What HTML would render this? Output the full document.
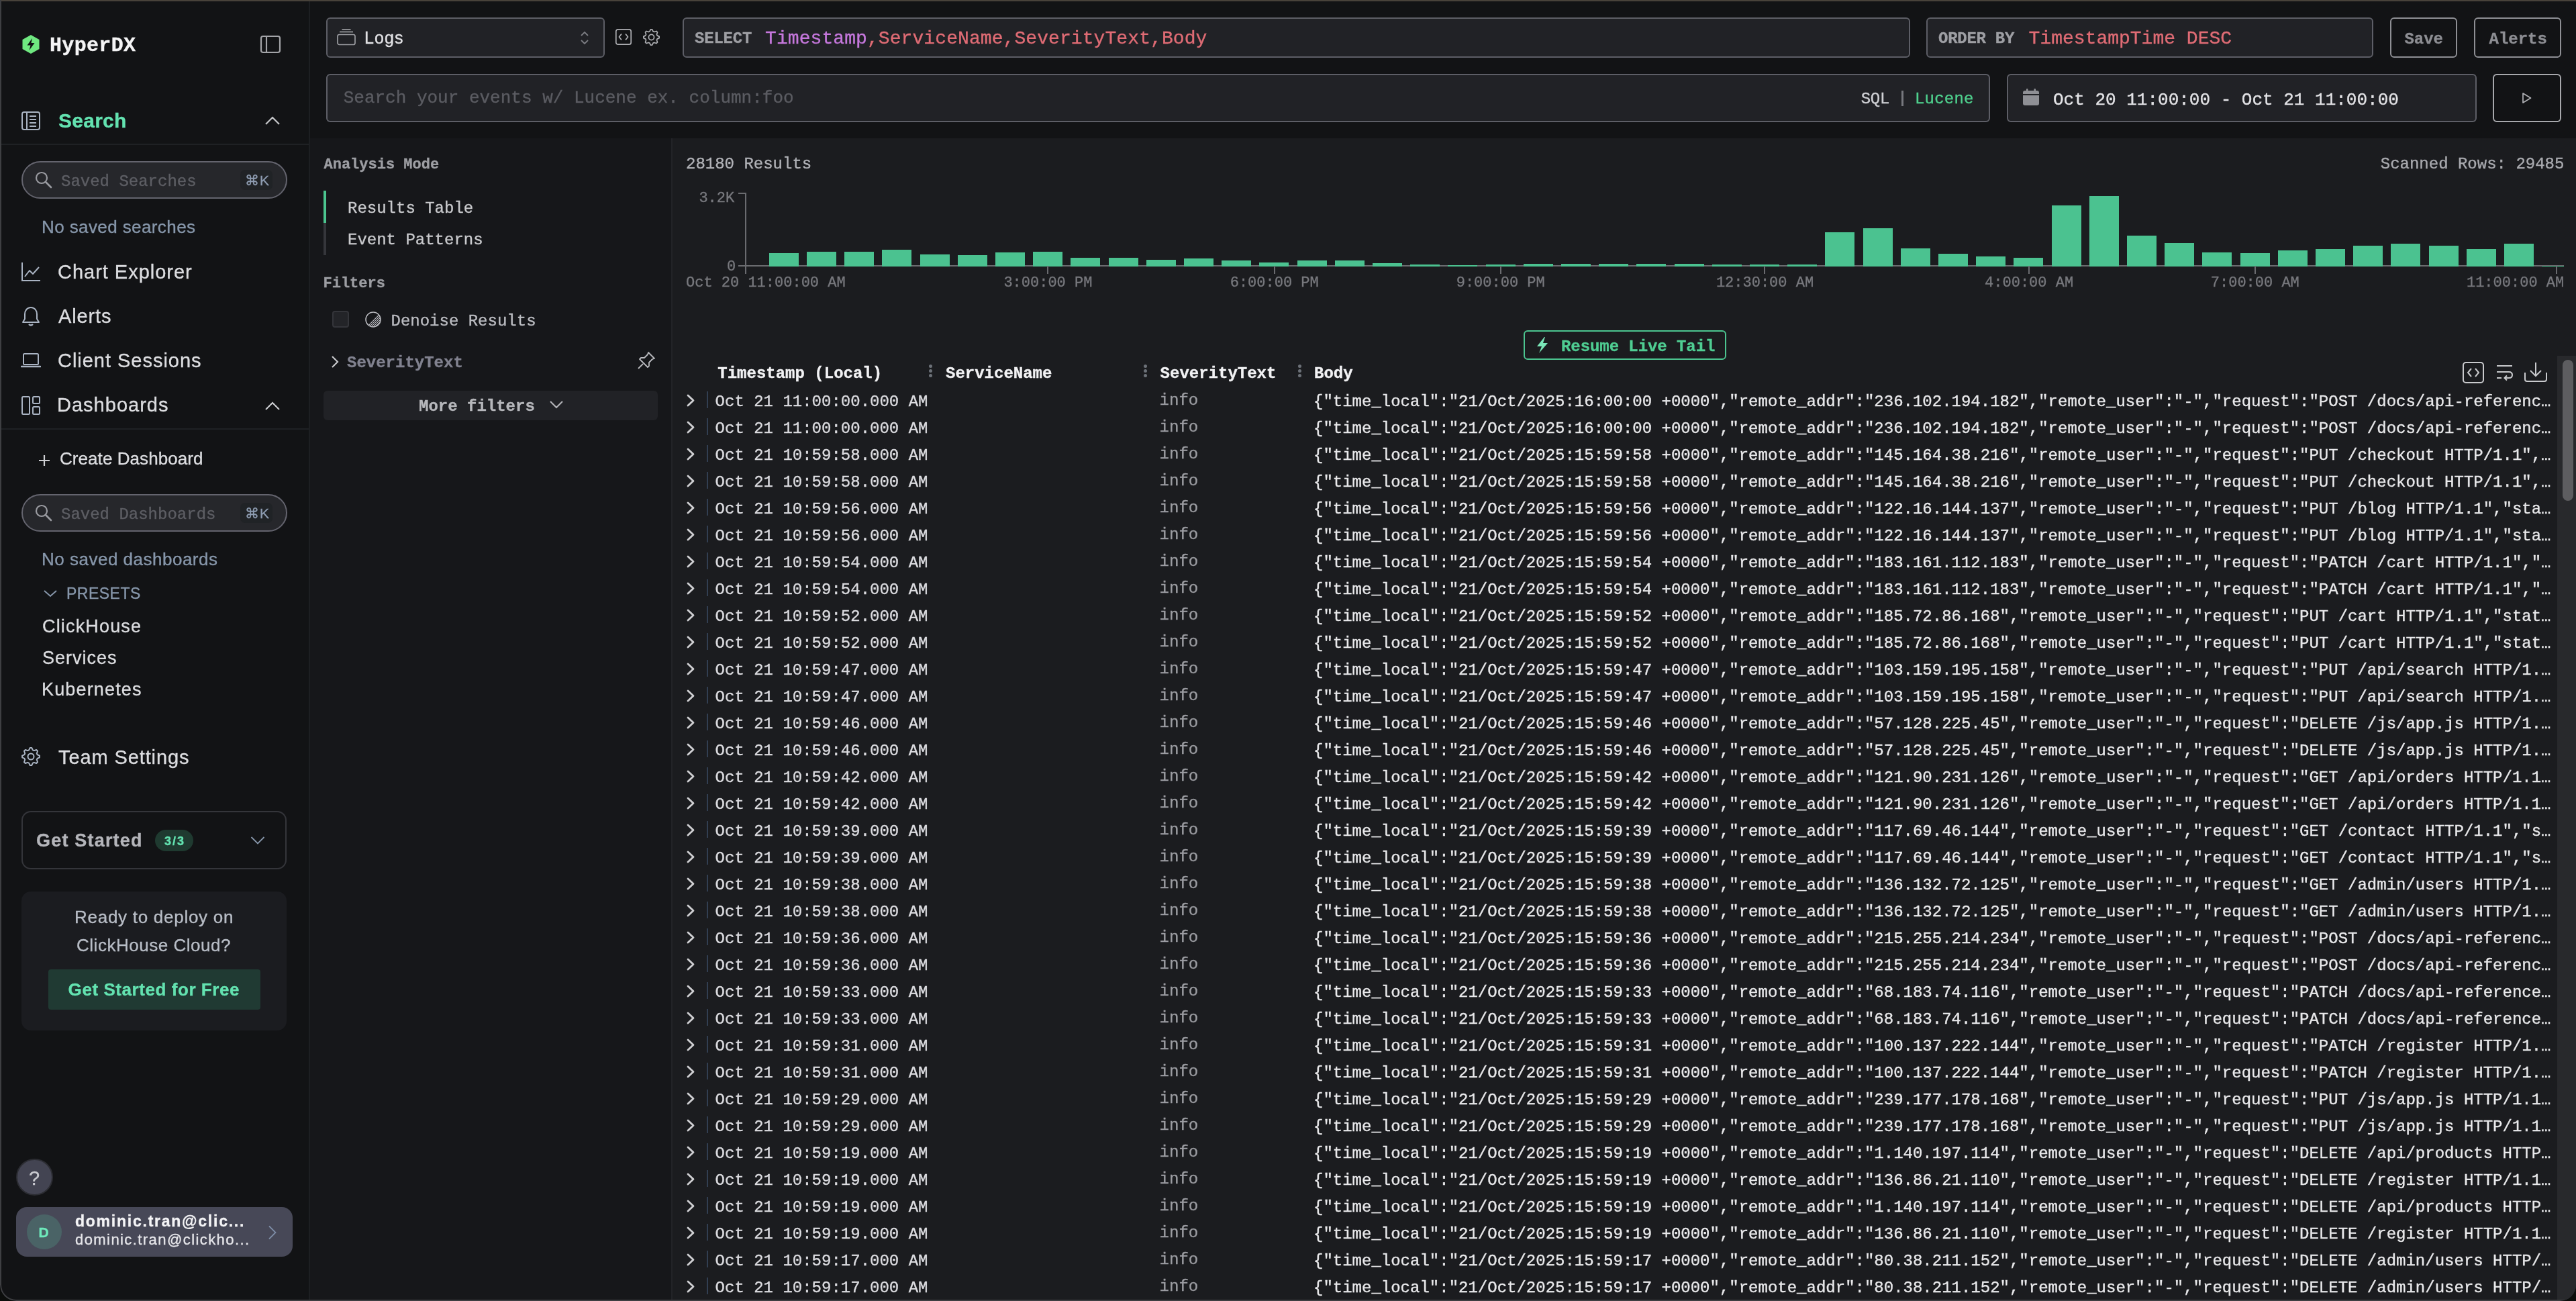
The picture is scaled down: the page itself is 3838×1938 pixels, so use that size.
<!DOCTYPE html>
<html><head><meta charset="utf-8"><style>
html,body{margin:0;padding:0;}
div{-webkit-text-stroke:0.35px currentColor;}
body{width:3838px;height:1938px;position:relative;overflow:hidden;background:#0c0e0c;}
</style></head><body>
<div style="position:absolute;left:0;top:0;width:3838px;height:1938px;overflow:hidden;border-radius:0 0 24px 24px;will-change:transform;">
<div style="position:absolute;left:0px;top:0px;width:3838px;height:1938px;background:#121315;border-radius:0px;border-radius:0 0 22px 22px;"></div>
<div style="position:absolute;left:462px;top:2px;width:3376px;height:204px;background:#121315;border-radius:0px;"></div>
<div style="position:absolute;left:462px;top:206px;width:538px;height:1730px;background:#16171a;border-radius:0px;"></div>
<div style="position:absolute;left:1000px;top:206px;width:2px;height:1730px;background:#222327;border-radius:0px;"></div>
<div style="position:absolute;left:1002px;top:206px;width:2836px;height:1730px;background:#1b1c1f;border-radius:0px;"></div>
<div style="position:absolute;left:460px;top:2px;width:2px;height:1934px;background:#1d1f22;border-radius:0px;"></div>
<div style="position:absolute;left:0px;top:0px;width:3838px;height:2px;background:#48423a;border-radius:0px;"></div>
<div style="position:absolute;left:0;top:0;width:3838px;height:1938px;box-sizing:border-box;border-left:2px solid #3e3f42;border-bottom:2px solid #3e3f42;border-right:0;border-radius:0 0 24px 24px;pointer-events:none"></div>
<svg style="position:absolute;left:32px;top:51px;" width="28" height="30" viewBox="0 0 28 30" fill="none"><path d="M14 1 L26.5 8 L26.5 22 L14 29 L1.5 22 L1.5 8 Z" fill="#6fe880"/><path d="M16 6 L8.5 16.5 L13.5 16.5 L11.5 24 L19.5 13 L14.5 13 Z" fill="#121315"/></svg>
<div style="position:absolute;left:74.00px;top:53.02px;font-family:'Liberation Mono', monospace;font-size:30px;line-height:1;font-weight:bold;color:#f4f4f5;letter-spacing:0.330px;white-space:pre;">HyperDX</div>
<svg style="position:absolute;left:386px;top:51px;" width="34" height="30" viewBox="0 0 34 30" fill="none"><rect x="3" y="3" width="28" height="24" rx="3" stroke="#a3a4a8" stroke-width="2.2"/><line x1="11" y1="3" x2="11" y2="27" stroke="#a3a4a8" stroke-width="2.2"/></svg>
<svg style="position:absolute;left:31px;top:165px;" width="30" height="30" viewBox="0 0 30 30" fill="none"><rect x="2" y="2" width="26" height="26" rx="3" stroke="#aab4c3" stroke-width="2"/><line x1="9" y1="2" x2="9" y2="28" stroke="#aab4c3" stroke-width="2"/><line x1="13" y1="8" x2="23" y2="8" stroke="#aab4c3" stroke-width="2"/><line x1="13" y1="13" x2="23" y2="13" stroke="#aab4c3" stroke-width="2"/><line x1="13" y1="18" x2="23" y2="18" stroke="#aab4c3" stroke-width="2"/><line x1="13" y1="23" x2="23" y2="23" stroke="#aab4c3" stroke-width="2"/></svg>
<div style="position:absolute;left:87.00px;top:164.60px;font-family:'Liberation Sans', sans-serif;font-size:30px;line-height:1;font-weight:bold;color:#63e2b0;letter-spacing:0.252px;white-space:pre;">Search</div>
<svg style="position:absolute;left:394px;top:172px;" width="24" height="16" viewBox="0 0 24 16" fill="none"><path d="M2 13 L12 3 L22 13" stroke="#c9cacd" stroke-width="2.2"/></svg>
<div style="position:absolute;left:2px;top:214px;width:458px;height:2px;background:#1f2124;border-radius:0px;"></div>
<div style="position:absolute;left:32px;top:240px;width:396px;height:56px;background:#26272b;border:2px solid #64646e;box-sizing:border-box;border-radius:28px;"></div>
<svg style="position:absolute;left:51px;top:254px;" width="28" height="28" viewBox="0 0 28 28" fill="none"><circle cx="11" cy="11" r="8" stroke="#9a9ba1" stroke-width="2.2"/><line x1="17" y1="17" x2="25" y2="25" stroke="#9a9ba1" stroke-width="2.6" stroke-linecap="round"/></svg>
<div style="position:absolute;left:91.00px;top:258.62px;font-family:'Liberation Mono', monospace;font-size:24px;line-height:1;font-weight:normal;color:#5d5e64;letter-spacing:0.000px;white-space:pre;">Saved Searches</div>
<div style="position:absolute;left:358px;top:253px;width:48px;height:30px;background:#202326;border-radius:7px;"></div>
<div style="position:absolute;left:365.00px;top:258.22px;font-family:'Liberation Sans', sans-serif;font-size:21px;line-height:1;font-weight:normal;color:#8e9db2;letter-spacing:1.000px;white-space:pre;">⌘K</div>
<div style="position:absolute;left:62.00px;top:324.99px;font-family:'Liberation Sans', sans-serif;font-size:26px;line-height:1;font-weight:normal;color:#8797ab;letter-spacing:0.402px;white-space:pre;">No saved searches</div>
<svg style="position:absolute;left:31px;top:390px;" width="30" height="30" viewBox="0 0 30 30" fill="none"><path d="M2 1 V28 H29" stroke="#aab4c3" stroke-width="2"/><path d="M6 22 L13 13 L18 18 L27 8" stroke="#aab4c3" stroke-width="2" stroke-linejoin="round"/></svg>
<div style="position:absolute;left:86.00px;top:391.45px;font-family:'Liberation Sans', sans-serif;font-size:29px;line-height:1;font-weight:normal;color:#dcdde0;letter-spacing:0.977px;white-space:pre;">Chart Explorer</div>
<svg style="position:absolute;left:31px;top:455px;" width="30" height="32" viewBox="0 0 30 32" fill="none"><path d="M15 3 C9 3 6 8 6 13 V20 L3 25 H27 L24 20 V13 C24 8 21 3 15 3 Z" stroke="#aab4c3" stroke-width="2" stroke-linejoin="round"/><path d="M12 28 Q15 31 18 28" stroke="#aab4c3" stroke-width="2.4"/></svg>
<div style="position:absolute;left:87.00px;top:457.45px;font-family:'Liberation Sans', sans-serif;font-size:29px;line-height:1;font-weight:normal;color:#dcdde0;letter-spacing:0.874px;white-space:pre;">Alerts</div>
<svg style="position:absolute;left:31px;top:524px;" width="30" height="26" viewBox="0 0 30 26" fill="none"><rect x="4" y="3" width="22" height="16" rx="1.5" stroke="#aab4c3" stroke-width="2"/><path d="M1 22 H29" stroke="#aab4c3" stroke-width="2.6" stroke-linecap="round"/></svg>
<div style="position:absolute;left:86.00px;top:523.15px;font-family:'Liberation Sans', sans-serif;font-size:29px;line-height:1;font-weight:normal;color:#dcdde0;letter-spacing:0.974px;white-space:pre;">Client Sessions</div>
<svg style="position:absolute;left:31px;top:589px;" width="30" height="30" viewBox="0 0 30 30" fill="none"><rect x="2" y="2" width="11" height="26" rx="1.5" stroke="#aab4c3" stroke-width="2"/><rect x="18" y="2" width="10" height="10" rx="1.5" stroke="#aab4c3" stroke-width="2"/><rect x="18" y="17" width="10" height="11" rx="1.5" stroke="#aab4c3" stroke-width="2"/></svg>
<div style="position:absolute;left:85.00px;top:589.45px;font-family:'Liberation Sans', sans-serif;font-size:29px;line-height:1;font-weight:normal;color:#dcdde0;letter-spacing:1.014px;white-space:pre;">Dashboards</div>
<svg style="position:absolute;left:394px;top:597px;" width="24" height="16" viewBox="0 0 24 16" fill="none"><path d="M2 13 L12 3 L22 13" stroke="#c9cacd" stroke-width="2.2"/></svg>
<div style="position:absolute;left:2px;top:638px;width:458px;height:2px;background:#1f2124;border-radius:0px;"></div>
<svg style="position:absolute;left:57px;top:677px;" width="18" height="18" viewBox="0 0 18 18" fill="none"><path d="M9 1 V17 M1 9 H17" stroke="#cfd0d3" stroke-width="2.2"/></svg>
<div style="position:absolute;left:89.00px;top:670.49px;font-family:'Liberation Sans', sans-serif;font-size:26px;line-height:1;font-weight:normal;color:#dcdde0;letter-spacing:0.067px;white-space:pre;">Create Dashboard</div>
<div style="position:absolute;left:32px;top:736px;width:396px;height:56px;background:#26272b;border:2px solid #64646e;box-sizing:border-box;border-radius:28px;"></div>
<svg style="position:absolute;left:51px;top:750px;" width="28" height="28" viewBox="0 0 28 28" fill="none"><circle cx="11" cy="11" r="8" stroke="#9a9ba1" stroke-width="2.2"/><line x1="17" y1="17" x2="25" y2="25" stroke="#9a9ba1" stroke-width="2.6" stroke-linecap="round"/></svg>
<div style="position:absolute;left:91.00px;top:754.62px;font-family:'Liberation Mono', monospace;font-size:24px;line-height:1;font-weight:normal;color:#5d5e64;letter-spacing:0.000px;white-space:pre;">Saved Dashboards</div>
<div style="position:absolute;left:358px;top:749px;width:48px;height:30px;background:#202326;border-radius:7px;"></div>
<div style="position:absolute;left:365.00px;top:754.22px;font-family:'Liberation Sans', sans-serif;font-size:21px;line-height:1;font-weight:normal;color:#8e9db2;letter-spacing:1.000px;white-space:pre;">⌘K</div>
<div style="position:absolute;left:62.00px;top:820.49px;font-family:'Liberation Sans', sans-serif;font-size:26px;line-height:1;font-weight:normal;color:#8797ab;letter-spacing:0.503px;white-space:pre;">No saved dashboards</div>
<svg style="position:absolute;left:63px;top:877px;" width="24" height="14" viewBox="0 0 24 14" fill="none"><path d="M3 3 L12 11 L21 3" stroke="#8797ab" stroke-width="2"/></svg>
<div style="position:absolute;left:99.00px;top:872.53px;font-family:'Liberation Sans', sans-serif;font-size:23px;line-height:1;font-weight:normal;color:#8797ab;letter-spacing:0.496px;white-space:pre;">PRESETS</div>
<div style="position:absolute;left:63.00px;top:920.14px;font-family:'Liberation Sans', sans-serif;font-size:27px;line-height:1;font-weight:normal;color:#dcdde0;letter-spacing:1.164px;white-space:pre;">ClickHouse</div>
<div style="position:absolute;left:63.00px;top:967.14px;font-family:'Liberation Sans', sans-serif;font-size:27px;line-height:1;font-weight:normal;color:#dcdde0;letter-spacing:0.996px;white-space:pre;">Services</div>
<div style="position:absolute;left:62.00px;top:1014.14px;font-family:'Liberation Sans', sans-serif;font-size:27px;line-height:1;font-weight:normal;color:#dcdde0;letter-spacing:1.156px;white-space:pre;">Kubernetes</div>
<svg style="position:absolute;left:31px;top:1112px;" width="30" height="30" viewBox="0 0 30 30" fill="none"><path d="M27.94 13.73 L27.94 16.27 L24.57 17.90 L23.82 19.71 L25.05 23.25 L23.25 25.05 L19.71 23.82 L17.90 24.57 L16.27 27.94 L13.73 27.94 L12.10 24.57 L10.29 23.82 L6.75 25.05 L4.95 23.25 L6.18 19.71 L5.43 17.90 L2.06 16.27 L2.06 13.73 L5.43 12.10 L6.18 10.29 L4.95 6.75 L6.75 4.95 L10.29 6.18 L12.10 5.43 L13.73 2.06 L16.27 2.06 L17.90 5.43 L19.71 6.18 L23.25 4.95 L25.05 6.75 L23.82 10.29 L24.57 12.10 Z" stroke="#aab4c3" stroke-width="2" stroke-linejoin="round"/><circle cx="15" cy="15" r="4.5" stroke="#aab4c3" stroke-width="2"/></svg>
<div style="position:absolute;left:87.00px;top:1113.95px;font-family:'Liberation Sans', sans-serif;font-size:29px;line-height:1;font-weight:normal;color:#dcdde0;letter-spacing:0.895px;white-space:pre;">Team Settings</div>
<div style="position:absolute;left:32px;top:1208px;width:395px;height:87px;background:none;border:2px solid #34353a;box-sizing:border-box;border-radius:14px;"></div>
<div style="position:absolute;left:54.00px;top:1239.14px;font-family:'Liberation Sans', sans-serif;font-size:27px;line-height:1;font-weight:bold;color:#b4b5ba;letter-spacing:1.196px;white-space:pre;">Get Started</div>
<div style="position:absolute;left:231px;top:1236px;width:57px;height:32px;background:#1f3a30;border-radius:16px;"></div>
<div style="position:absolute;left:245.00px;top:1243.76px;font-family:'Liberation Sans', sans-serif;font-size:18px;line-height:1;font-weight:bold;color:#63e2b0;letter-spacing:1.994px;white-space:pre;">3/3</div>
<svg style="position:absolute;left:372px;top:1244px;" width="24" height="16" viewBox="0 0 24 16" fill="none"><path d="M2.5 3 L12 12.5 L21.5 3" stroke="#8797ab" stroke-width="1.8"/></svg>
<div style="position:absolute;left:32px;top:1328px;width:395px;height:207px;background:#1b1c20;border-radius:14px;"></div>
<div style="position:absolute;left:111.00px;top:1353.39px;font-family:'Liberation Sans', sans-serif;font-size:26px;line-height:1;font-weight:normal;color:#b8bdc6;letter-spacing:0.730px;white-space:pre;">Ready to deploy on</div>
<div style="position:absolute;left:114.00px;top:1394.99px;font-family:'Liberation Sans', sans-serif;font-size:26px;line-height:1;font-weight:normal;color:#b8bdc6;letter-spacing:0.522px;white-space:pre;">ClickHouse Cloud?</div>
<div style="position:absolute;left:72px;top:1444px;width:316px;height:60px;background:#203a33;border-radius:4px;"></div>
<div style="position:absolute;left:101.60px;top:1460.99px;font-family:'Liberation Sans', sans-serif;font-size:26px;line-height:1;font-weight:bold;color:#63e2b0;letter-spacing:0.563px;white-space:pre;">Get Started for Free</div>
<div style="position:absolute;left:24px;top:1726px;width:55px;height:55px;background:#434452;border:2px solid #2c2d33;box-sizing:border-box;border-radius:28px;"></div>
<div style="position:absolute;left:43.00px;top:1741.45px;font-family:'Liberation Sans', sans-serif;font-size:29px;line-height:1;font-weight:normal;color:#c9cad0;letter-spacing:0.000px;white-space:pre;">?</div>
<div style="position:absolute;left:24px;top:1798px;width:412px;height:74px;background:#474857;border-radius:16px;"></div>
<div style="position:absolute;left:40px;top:1809px;width:52px;height:52px;background:#4a6366;border-radius:26px;"></div>
<div style="position:absolute;left:57.50px;top:1824.52px;font-family:'Liberation Sans', sans-serif;font-size:21px;line-height:1;font-weight:bold;color:#6ee9bb;letter-spacing:0.000px;white-space:pre;">D</div>
<div style="position:absolute;left:112.00px;top:1807.53px;font-family:'Liberation Sans', sans-serif;font-size:23px;line-height:1;font-weight:bold;color:#f4f4f6;letter-spacing:1.759px;white-space:pre;">dominic.tran@clic...</div>
<div style="position:absolute;left:112.00px;top:1836.38px;font-family:'Liberation Sans', sans-serif;font-size:22px;line-height:1;font-weight:normal;color:#e6e6ea;letter-spacing:1.426px;white-space:pre;">dominic.tran@clickho...</div>
<svg style="position:absolute;left:398px;top:1824px;" width="16" height="24" viewBox="0 0 16 24" fill="none"><path d="M3 2.5 L12.5 12 L3 21.5" stroke="#7d8ca5" stroke-width="1.8"/></svg>
<div style="position:absolute;left:486px;top:26px;width:415px;height:60px;background:#212226;border:2px solid #5d5e66;box-sizing:border-box;border-radius:6px;"></div>
<svg style="position:absolute;left:501px;top:42px;" width="30" height="26" viewBox="0 0 30 26" fill="none"><rect x="2" y="9.5" width="26" height="15" rx="2.5" stroke="#9c9da2" stroke-width="1.7"/><line x1="5" y1="5.5" x2="25" y2="5.5" stroke="#9c9da2" stroke-width="1.7"/><line x1="8.5" y1="2" x2="21.5" y2="2" stroke="#9c9da2" stroke-width="1.7"/></svg>
<div style="position:absolute;left:543.00px;top:43.84px;font-family:'Liberation Sans', sans-serif;font-size:25px;line-height:1;font-weight:normal;color:#e2e2e5;letter-spacing:1.096px;white-space:pre;">Logs</div>
<svg style="position:absolute;left:863px;top:46px;" width="16" height="21" viewBox="0 0 16 21" fill="none"><path d="M3 7 L8 2 L13 7 M3 14 L8 19 L13 14" stroke="#7c7d83" stroke-width="1.8"/></svg>
<svg style="position:absolute;left:916px;top:42px;" width="26" height="26" viewBox="0 0 26 26" fill="none"><rect x="1.8" y="1.8" width="22.4" height="22.4" rx="3" stroke="#aeafb3" stroke-width="1.7"/><path d="M10 8.5 L6.5 13 L10 17.5 M16 8.5 L19.5 13 L16 17.5" stroke="#aeafb3" stroke-width="1.7"/></svg>
<svg style="position:absolute;left:957px;top:42px;" width="27" height="27" viewBox="0 0 30 30" fill="none"><path d="M27.94 13.73 L27.94 16.27 L24.57 17.90 L23.82 19.71 L25.05 23.25 L23.25 25.05 L19.71 23.82 L17.90 24.57 L16.27 27.94 L13.73 27.94 L12.10 24.57 L10.29 23.82 L6.75 25.05 L4.95 23.25 L6.18 19.71 L5.43 17.90 L2.06 16.27 L2.06 13.73 L5.43 12.10 L6.18 10.29 L4.95 6.75 L6.75 4.95 L10.29 6.18 L12.10 5.43 L13.73 2.06 L16.27 2.06 L17.90 5.43 L19.71 6.18 L23.25 4.95 L25.05 6.75 L23.82 10.29 L24.57 12.10 Z" stroke="#aeafb3" stroke-width="1.9" stroke-linejoin="round"/><circle cx="15" cy="15" r="4.5" stroke="#aeafb3" stroke-width="1.9"/></svg>
<div style="position:absolute;left:1017px;top:26px;width:1829px;height:60px;background:#212226;border:2px solid #5d5e66;box-sizing:border-box;border-radius:6px;"></div>
<div style="position:absolute;left:1035.00px;top:46.22px;font-family:'Liberation Mono', monospace;font-size:24px;line-height:1;font-weight:bold;color:#9e9fa4;letter-spacing:-0.202px;white-space:pre;">SELECT</div>
<div style="position:absolute;left:1140px;top:44.05px;font-family:'Liberation Mono', monospace;font-size:28px;line-height:1;letter-spacing:0.08px;white-space:pre;color:#e06c75"><span style="color:#c678dd">Timestamp</span>,ServiceName,SeverityText,Body</div>

<div style="position:absolute;left:2870px;top:26px;width:666px;height:60px;background:#212226;border:2px solid #5d5e66;box-sizing:border-box;border-radius:6px;"></div>
<div style="position:absolute;left:2888.00px;top:46.22px;font-family:'Liberation Mono', monospace;font-size:24px;line-height:1;font-weight:bold;color:#9e9fa4;letter-spacing:-0.259px;white-space:pre;">ORDER BY</div>
<div style="position:absolute;left:3022.60px;top:44.05px;font-family:'Liberation Mono', monospace;font-size:28px;line-height:1;font-weight:normal;color:#e06c75;letter-spacing:0.000px;white-space:pre;">TimestampTime DESC</div>
<div style="position:absolute;left:3561px;top:26px;width:100px;height:60px;background:#121315;border:2px solid #8e8f94;box-sizing:border-box;border-radius:6px;"></div>
<div style="position:absolute;left:3582.40px;top:46.62px;font-family:'Liberation Mono', monospace;font-size:24px;line-height:1;font-weight:bold;color:#8d8e93;letter-spacing:0.000px;white-space:pre;">Save</div>
<div style="position:absolute;left:3686px;top:26px;width:130px;height:60px;background:#121315;border:2px solid #8e8f94;box-sizing:border-box;border-radius:6px;"></div>
<div style="position:absolute;left:3708.49px;top:46.62px;font-family:'Liberation Mono', monospace;font-size:24px;line-height:1;font-weight:bold;color:#8d8e93;letter-spacing:0.000px;white-space:pre;">Alerts</div>
<div style="position:absolute;left:486px;top:110px;width:2479px;height:72px;background:#212226;border:2px solid #5d5e66;box-sizing:border-box;border-radius:6px;"></div>
<div style="position:absolute;left:511.70px;top:133.08px;font-family:'Liberation Mono', monospace;font-size:26px;line-height:1;font-weight:normal;color:#5b5c62;letter-spacing:0.000px;white-space:pre;">Search your events w/ Lucene ex. column:foo</div>
<div style="position:absolute;left:2772.70px;top:135.62px;font-family:'Liberation Mono', monospace;font-size:24px;line-height:1;font-weight:normal;color:#cfd0d4;letter-spacing:-0.252px;white-space:pre;">SQL</div>
<div style="position:absolute;left:2833px;top:135px;width:3px;height:23px;background:#77787e;border-radius:0px;"></div>
<div style="position:absolute;left:2853.00px;top:135.62px;font-family:'Liberation Mono', monospace;font-size:24px;line-height:1;font-weight:normal;color:#4fd18e;letter-spacing:0.198px;white-space:pre;">Lucene</div>
<div style="position:absolute;left:2990px;top:110px;width:700px;height:72px;background:#212226;border:2px solid #5d5e66;box-sizing:border-box;border-radius:6px;"></div>
<svg style="position:absolute;left:3012px;top:131px;" width="28" height="28" viewBox="0 0 28 28" fill="none"><rect x="2" y="4" width="24" height="22" rx="3" fill="#8f9095"/><rect x="2" y="9" width="24" height="2" fill="#212226"/><rect x="7" y="1" width="2.5" height="6" rx="1" fill="#8f9095"/><rect x="18.5" y="1" width="2.5" height="6" rx="1" fill="#8f9095"/></svg>
<div style="position:absolute;left:3059.00px;top:135.88px;font-family:'Liberation Mono', monospace;font-size:26px;line-height:1;font-weight:normal;color:#e3e3e6;letter-spacing:0.000px;white-space:pre;">Oct 20 11:00:00 - Oct 21 11:00:00</div>
<div style="position:absolute;left:3714px;top:110px;width:102px;height:72px;background:#121315;border:2px solid #a7a8ac;box-sizing:border-box;border-radius:6px;"></div>
<svg style="position:absolute;left:3755px;top:136px;" width="20" height="20" viewBox="0 0 20 20" fill="none"><path d="M4 3 L15.5 10 L4 17 Z" stroke="#b0b1b5" stroke-width="1.7" stroke-linejoin="round"/></svg>
<div style="position:absolute;left:482.50px;top:235.15px;font-family:'Liberation Mono', monospace;font-size:22px;line-height:1;font-weight:bold;color:#9d9ea3;letter-spacing:0.000px;white-space:pre;">Analysis Mode</div>
<div style="position:absolute;left:482px;top:284px;width:4px;height:48px;background:#4bc58f;border-radius:0px;"></div>
<div style="position:absolute;left:482px;top:332px;width:4px;height:48px;background:#35363b;border-radius:0px;"></div>
<div style="position:absolute;left:518.00px;top:298.62px;font-family:'Liberation Mono', monospace;font-size:24px;line-height:1;font-weight:normal;color:#c9cacd;letter-spacing:0.000px;white-space:pre;">Results Table</div>
<div style="position:absolute;left:518.00px;top:346.32px;font-family:'Liberation Mono', monospace;font-size:24px;line-height:1;font-weight:normal;color:#c9cacd;letter-spacing:0.000px;white-space:pre;">Event Patterns</div>
<div style="position:absolute;left:481.50px;top:412.15px;font-family:'Liberation Mono', monospace;font-size:22px;line-height:1;font-weight:bold;color:#9d9ea3;letter-spacing:0.000px;white-space:pre;">Filters</div>
<div style="position:absolute;left:495px;top:463px;width:25px;height:25px;background:#232428;border:2px solid #34353a;box-sizing:border-box;border-radius:4px;"></div>
<svg style="position:absolute;left:542px;top:463px;" width="28" height="26" viewBox="0 0 28 26" fill="none"><defs><pattern id="hatch" width="3" height="3" patternUnits="userSpaceOnUse"><rect width="1.5" height="1.5" fill="#b5b6bb"/><rect x="1.5" y="1.5" width="1.5" height="1.5" fill="#b5b6bb"/></pattern></defs><circle cx="14" cy="13" r="11" stroke="#b5b6bb" stroke-width="1.6"/><path d="M21.8 5.2 A11 11 0 0 1 6.2 20.8 Z" fill="url(#hatch)"/></svg>
<div style="position:absolute;left:582.50px;top:467.32px;font-family:'Liberation Mono', monospace;font-size:24px;line-height:1;font-weight:normal;color:#bcbdc2;letter-spacing:0.000px;white-space:pre;">Denoise Results</div>
<svg style="position:absolute;left:490px;top:528px;" width="18" height="22" viewBox="0 0 18 22" fill="none"><path d="M5 3 L13 11 L5 19" stroke="#c6c7cb" stroke-width="2.2"/></svg>
<div style="position:absolute;left:517.00px;top:528.62px;font-family:'Liberation Mono', monospace;font-size:24px;line-height:1;font-weight:bold;color:#81828f;letter-spacing:0.000px;white-space:pre;">SeverityText</div>
<svg style="position:absolute;left:948px;top:522px;" width="30" height="30" viewBox="0 0 30 30" fill="none"><path d="M18 3 L27 12 L24 13 L19 18 L19 23 L17 25 L5 13 L7 11 L12 11 L17 6 Z" stroke="#b9babe" stroke-width="1.8" stroke-linejoin="round"/><path d="M10 20 L3 27" stroke="#b9babe" stroke-width="1.8"/></svg>
<div style="position:absolute;left:482px;top:582px;width:498px;height:44px;background:#212226;border-radius:6px;"></div>
<div style="position:absolute;left:624.00px;top:594.32px;font-family:'Liberation Mono', monospace;font-size:24px;line-height:1;font-weight:bold;color:#b6b7bb;letter-spacing:0.000px;white-space:pre;">More filters</div>
<svg style="position:absolute;left:817px;top:595px;" width="24" height="16" viewBox="0 0 24 16" fill="none"><path d="M3 3 L12 12 L21 3" stroke="#b6b7bb" stroke-width="2"/></svg>
<div style="position:absolute;left:1022.00px;top:232.62px;font-family:'Liberation Mono', monospace;font-size:24px;line-height:1;font-weight:normal;color:#b1b2b7;letter-spacing:0.000px;white-space:pre;">28180 Results</div>
<div style="position:absolute;left:3546.76px;top:233.42px;font-family:'Liberation Mono', monospace;font-size:24px;line-height:1;font-weight:normal;color:#a9aaaf;letter-spacing:0.000px;white-space:pre;">Scanned Rows: 29485</div>
<div style="position:absolute;left:1041.39px;top:285.15px;font-family:'Liberation Mono', monospace;font-size:22px;line-height:1;font-weight:normal;color:#78797e;letter-spacing:0.000px;white-space:pre;">3.2K</div>
<div style="position:absolute;left:1083.00px;top:386.65px;font-family:'Liberation Mono', monospace;font-size:22px;line-height:1;font-weight:normal;color:#78797e;letter-spacing:0.000px;white-space:pre;">0</div>
<div style="position:absolute;left:1100px;top:287px;width:12px;height:2px;background:#6a6b6f;border-radius:0px;"></div>
<div style="position:absolute;left:1110px;top:287px;width:2px;height:121px;background:#6a6b6f;border-radius:0px;"></div>
<div style="position:absolute;left:1100px;top:395px;width:2720px;height:2px;background:#6a6b6f;border-radius:0px;"></div>
<div style="position:absolute;left:1145.8px;top:377.3px;width:44px;height:19.5px;background:#4bc290;border-radius:0px;"></div>
<div style="position:absolute;left:1202.0px;top:375.1px;width:44px;height:21.7px;background:#4bc290;border-radius:0px;"></div>
<div style="position:absolute;left:1258.2px;top:375.1px;width:44px;height:21.7px;background:#4bc290;border-radius:0px;"></div>
<div style="position:absolute;left:1314.4px;top:372.0px;width:44px;height:24.8px;background:#4bc290;border-radius:0px;"></div>
<div style="position:absolute;left:1370.6px;top:378.8px;width:44px;height:18px;background:#4bc290;border-radius:0px;"></div>
<div style="position:absolute;left:1426.8px;top:379.8px;width:44px;height:17px;background:#4bc290;border-radius:0px;"></div>
<div style="position:absolute;left:1483.0px;top:376.0px;width:44px;height:20.8px;background:#4bc290;border-radius:0px;"></div>
<div style="position:absolute;left:1539.2px;top:374.5px;width:44px;height:22.3px;background:#4bc290;border-radius:0px;"></div>
<div style="position:absolute;left:1595.4px;top:384.4px;width:44px;height:12.4px;background:#4bc290;border-radius:0px;"></div>
<div style="position:absolute;left:1651.6px;top:384.0px;width:44px;height:12.8px;background:#4bc290;border-radius:0px;"></div>
<div style="position:absolute;left:1707.8px;top:387.2px;width:44px;height:9.6px;background:#4bc290;border-radius:0px;"></div>
<div style="position:absolute;left:1764.0px;top:385.3px;width:44px;height:11.5px;background:#4bc290;border-radius:0px;"></div>
<div style="position:absolute;left:1820.2px;top:388.1px;width:44px;height:8.7px;background:#4bc290;border-radius:0px;"></div>
<div style="position:absolute;left:1876.4px;top:391.0px;width:44px;height:5.8px;background:#4bc290;border-radius:0px;"></div>
<div style="position:absolute;left:1932.6px;top:387.5px;width:44px;height:9.3px;background:#4bc290;border-radius:0px;"></div>
<div style="position:absolute;left:1988.8px;top:387.5px;width:44px;height:9.3px;background:#4bc290;border-radius:0px;"></div>
<div style="position:absolute;left:2045.0px;top:391.9px;width:44px;height:4.9px;background:#4bc290;border-radius:0px;"></div>
<div style="position:absolute;left:2101.2px;top:393.5px;width:44px;height:3.3px;background:#4bc290;border-radius:0px;"></div>
<div style="position:absolute;left:2157.4px;top:394.8px;width:44px;height:2px;background:#4bc290;border-radius:0px;"></div>
<div style="position:absolute;left:2213.6px;top:393.8px;width:44px;height:3px;background:#4bc290;border-radius:0px;"></div>
<div style="position:absolute;left:2269.8px;top:393.3px;width:44px;height:3.5px;background:#4bc290;border-radius:0px;"></div>
<div style="position:absolute;left:2326.0px;top:393.1px;width:44px;height:3.7px;background:#4bc290;border-radius:0px;"></div>
<div style="position:absolute;left:2382.2px;top:393.1px;width:44px;height:3.7px;background:#4bc290;border-radius:0px;"></div>
<div style="position:absolute;left:2438.4px;top:393.1px;width:44px;height:3.7px;background:#4bc290;border-radius:0px;"></div>
<div style="position:absolute;left:2494.6px;top:392.9px;width:44px;height:3.9px;background:#4bc290;border-radius:0px;"></div>
<div style="position:absolute;left:2550.8px;top:393.8px;width:44px;height:3px;background:#4bc290;border-radius:0px;"></div>
<div style="position:absolute;left:2607.0px;top:393.8px;width:44px;height:3px;background:#4bc290;border-radius:0px;"></div>
<div style="position:absolute;left:2663.2px;top:394.0px;width:44px;height:2.8px;background:#4bc290;border-radius:0px;"></div>
<div style="position:absolute;left:2719.4px;top:346.2px;width:44px;height:50.6px;background:#4bc290;border-radius:0px;"></div>
<div style="position:absolute;left:2775.6px;top:340.0px;width:44px;height:56.8px;background:#4bc290;border-radius:0px;"></div>
<div style="position:absolute;left:2831.8px;top:370.4px;width:44px;height:26.4px;background:#4bc290;border-radius:0px;"></div>
<div style="position:absolute;left:2888.0px;top:378.2px;width:44px;height:18.6px;background:#4bc290;border-radius:0px;"></div>
<div style="position:absolute;left:2944.2px;top:382.2px;width:44px;height:14.6px;background:#4bc290;border-radius:0px;"></div>
<div style="position:absolute;left:3000.4px;top:384.1px;width:44px;height:12.7px;background:#4bc290;border-radius:0px;"></div>
<div style="position:absolute;left:3056.6px;top:306.4px;width:44px;height:90.4px;background:#4bc290;border-radius:0px;"></div>
<div style="position:absolute;left:3112.8px;top:292.1px;width:44px;height:104.7px;background:#4bc290;border-radius:0px;"></div>
<div style="position:absolute;left:3169.0px;top:351.4px;width:44px;height:45.4px;background:#4bc290;border-radius:0px;"></div>
<div style="position:absolute;left:3225.2px;top:362.4px;width:44px;height:34.4px;background:#4bc290;border-radius:0px;"></div>
<div style="position:absolute;left:3281.4px;top:375.5px;width:44px;height:21.3px;background:#4bc290;border-radius:0px;"></div>
<div style="position:absolute;left:3337.6px;top:376.5px;width:44px;height:20.3px;background:#4bc290;border-radius:0px;"></div>
<div style="position:absolute;left:3393.8px;top:373.4px;width:44px;height:23.4px;background:#4bc290;border-radius:0px;"></div>
<div style="position:absolute;left:3450.0px;top:370.6px;width:44px;height:26.2px;background:#4bc290;border-radius:0px;"></div>
<div style="position:absolute;left:3506.2px;top:366.1px;width:44px;height:30.7px;background:#4bc290;border-radius:0px;"></div>
<div style="position:absolute;left:3562.4px;top:363.3px;width:44px;height:33.5px;background:#4bc290;border-radius:0px;"></div>
<div style="position:absolute;left:3618.6px;top:366.4px;width:44px;height:30.4px;background:#4bc290;border-radius:0px;"></div>
<div style="position:absolute;left:3674.8px;top:370.6px;width:44px;height:26.2px;background:#4bc290;border-radius:0px;"></div>
<div style="position:absolute;left:3731.0px;top:362.8px;width:44px;height:34px;background:#4bc290;border-radius:0px;"></div>
<div style="position:absolute;left:3787.2px;top:395.6px;width:32.5px;height:1.2px;background:#4bc290;border-radius:0px;"></div>
<div style="position:absolute;left:1560.3px;top:396px;width:2px;height:12px;background:#6a6b6f;border-radius:0px;"></div>
<div style="position:absolute;left:1495.39px;top:411.15px;font-family:'Liberation Mono', monospace;font-size:22px;line-height:1;font-weight:normal;color:#78797e;letter-spacing:0.000px;white-space:pre;">3:00:00 PM</div>
<div style="position:absolute;left:1897.6px;top:396px;width:2px;height:12px;background:#6a6b6f;border-radius:0px;"></div>
<div style="position:absolute;left:1832.69px;top:411.15px;font-family:'Liberation Mono', monospace;font-size:22px;line-height:1;font-weight:normal;color:#78797e;letter-spacing:0.000px;white-space:pre;">6:00:00 PM</div>
<div style="position:absolute;left:2234.6px;top:396px;width:2px;height:12px;background:#6a6b6f;border-radius:0px;"></div>
<div style="position:absolute;left:2169.69px;top:411.15px;font-family:'Liberation Mono', monospace;font-size:22px;line-height:1;font-weight:normal;color:#78797e;letter-spacing:0.000px;white-space:pre;">9:00:00 PM</div>
<div style="position:absolute;left:2628.4px;top:396px;width:2px;height:12px;background:#6a6b6f;border-radius:0px;"></div>
<div style="position:absolute;left:2556.89px;top:411.15px;font-family:'Liberation Mono', monospace;font-size:22px;line-height:1;font-weight:normal;color:#78797e;letter-spacing:0.000px;white-space:pre;">12:30:00 AM</div>
<div style="position:absolute;left:3022px;top:396px;width:2px;height:12px;background:#6a6b6f;border-radius:0px;"></div>
<div style="position:absolute;left:2957.09px;top:411.15px;font-family:'Liberation Mono', monospace;font-size:22px;line-height:1;font-weight:normal;color:#78797e;letter-spacing:0.000px;white-space:pre;">4:00:00 AM</div>
<div style="position:absolute;left:3358.7px;top:396px;width:2px;height:12px;background:#6a6b6f;border-radius:0px;"></div>
<div style="position:absolute;left:3293.79px;top:411.15px;font-family:'Liberation Mono', monospace;font-size:22px;line-height:1;font-weight:normal;color:#78797e;letter-spacing:0.000px;white-space:pre;">7:00:00 AM</div>
<div style="position:absolute;left:3808px;top:396px;width:2px;height:12px;background:#6a6b6f;border-radius:0px;"></div>
<div style="position:absolute;left:1022.00px;top:411.15px;font-family:'Liberation Mono', monospace;font-size:22px;line-height:1;font-weight:normal;color:#78797e;letter-spacing:0.000px;white-space:pre;">Oct 20 11:00:00 AM</div>
<div style="position:absolute;left:3674.98px;top:411.15px;font-family:'Liberation Mono', monospace;font-size:22px;line-height:1;font-weight:normal;color:#78797e;letter-spacing:0.000px;white-space:pre;">11:00:00 AM</div>
<div style="position:absolute;left:2270px;top:492px;width:302px;height:44px;background:none;border:2px solid #4cc590;box-sizing:border-box;border-radius:6px;"></div>
<svg style="position:absolute;left:2287px;top:500px;" width="22" height="28" viewBox="0 0 22 28" fill="none"><path d="M14 2 L3 16 L10 16 L6 26 L19 11 L12 11 L15 2 Z" fill="#7ae7b8"/></svg>
<div style="position:absolute;left:2326.00px;top:504.92px;font-family:'Liberation Mono', monospace;font-size:24px;line-height:1;font-weight:bold;color:#4fcd92;letter-spacing:-0.069px;white-space:pre;">Resume Live Tail</div>
<div style="position:absolute;left:1069.30px;top:545.32px;font-family:'Liberation Mono', monospace;font-size:24px;line-height:1;font-weight:bold;color:#f2f2f4;letter-spacing:0.000px;white-space:pre;">Timestamp (Local)</div>
<div style="position:absolute;left:1409.00px;top:545.32px;font-family:'Liberation Mono', monospace;font-size:24px;line-height:1;font-weight:bold;color:#f2f2f4;letter-spacing:0.000px;white-space:pre;">ServiceName</div>
<div style="position:absolute;left:1728.60px;top:545.32px;font-family:'Liberation Mono', monospace;font-size:24px;line-height:1;font-weight:bold;color:#f2f2f4;letter-spacing:0.000px;white-space:pre;">SeverityText</div>
<div style="position:absolute;left:1958.00px;top:545.32px;font-family:'Liberation Mono', monospace;font-size:24px;line-height:1;font-weight:bold;color:#f2f2f4;letter-spacing:0.000px;white-space:pre;">Body</div>
<div style="position:absolute;left:1383.9px;top:542.5px;width:5px;height:5px;background:#6c7178;border-radius:3px;"></div>
<div style="position:absolute;left:1383.9px;top:549.5px;width:5px;height:5px;background:#6c7178;border-radius:3px;"></div>
<div style="position:absolute;left:1383.9px;top:556.5px;width:5px;height:5px;background:#6c7178;border-radius:3px;"></div>
<div style="position:absolute;left:1703.8px;top:542.5px;width:5px;height:5px;background:#6c7178;border-radius:3px;"></div>
<div style="position:absolute;left:1703.8px;top:549.5px;width:5px;height:5px;background:#6c7178;border-radius:3px;"></div>
<div style="position:absolute;left:1703.8px;top:556.5px;width:5px;height:5px;background:#6c7178;border-radius:3px;"></div>
<div style="position:absolute;left:1933.8px;top:542.5px;width:5px;height:5px;background:#6c7178;border-radius:3px;"></div>
<div style="position:absolute;left:1933.8px;top:549.5px;width:5px;height:5px;background:#6c7178;border-radius:3px;"></div>
<div style="position:absolute;left:1933.8px;top:556.5px;width:5px;height:5px;background:#6c7178;border-radius:3px;"></div>
<svg style="position:absolute;left:3668px;top:538px;" width="34" height="34" viewBox="0 0 34 34" fill="none"><rect x="2" y="2" width="30" height="30" rx="4" stroke="#c9cacd" stroke-width="2"/><path d="M14 11 L9 17 L14 23 M20 11 L25 17 L20 23" stroke="#c9cacd" stroke-width="2"/></svg>
<svg style="position:absolute;left:3718px;top:542px;" width="28" height="26" viewBox="0 0 28 26" fill="none"><path d="M2 3 H25 M2 12 H20 Q25 12 25 16.5 Q25 21 20 21 H14 M2 21 H9" stroke="#c9cacd" stroke-width="2"/><path d="M17 17.5 L13.5 21 L17 24.5" stroke="#c9cacd" stroke-width="2"/></svg>
<svg style="position:absolute;left:3760px;top:538px;" width="36" height="32" viewBox="0 0 36 32" fill="none"><path d="M18 2 V22 M10 14 L18 22 L26 14" stroke="#c9cacd" stroke-width="2"/><path d="M2 17 V27 Q2 30 5 30 H31 Q34 30 34 27 V17" stroke="#c9cacd" stroke-width="2"/></svg>
<div style="position:absolute;left:3810px;top:530px;width:28px;height:1406px;background:#28292c;border-radius:0px;"></div>
<div style="position:absolute;left:3818px;top:536px;width:16px;height:210px;background:#5d5d60;border-radius:8px;"></div>
<svg style="position:absolute;left:1019px;top:584.3px;" width="20" height="24" viewBox="0 0 20 24" fill="none"><path d="M6 5 L14 12.5 L6 20" stroke="#d0d0d3" stroke-width="2.8" stroke-linecap="round" stroke-linejoin="round"/></svg>
<div style="position:absolute;left:1053px;top:583.3px;width:2px;height:25px;background:#323f52;border-radius:0px;"></div>
<div style="position:absolute;left:1065.60px;top:586.92px;font-family:'Liberation Mono', monospace;font-size:24px;line-height:1;font-weight:normal;color:#dcdce0;letter-spacing:0.000px;white-space:pre;">Oct 21 11:00:00.000 AM</div>
<div style="position:absolute;left:1727.60px;top:584.92px;font-family:'Liberation Mono', monospace;font-size:24px;line-height:1;font-weight:normal;color:#9c9da2;letter-spacing:0.000px;white-space:pre;">info</div>
<div style="position:absolute;left:1957.00px;top:586.92px;font-family:'Liberation Mono', monospace;font-size:24px;line-height:1;font-weight:normal;color:#e9e9eb;letter-spacing:0.000px;white-space:pre;">{&quot;time_local&quot;:&quot;21/Oct/2025:16:00:00 +0000&quot;,&quot;remote_addr&quot;:&quot;236.102.194.182&quot;,&quot;remote_user&quot;:&quot;-&quot;,&quot;request&quot;:&quot;POST /docs/api-referenc…</div>
<svg style="position:absolute;left:1019px;top:624.3px;" width="20" height="24" viewBox="0 0 20 24" fill="none"><path d="M6 5 L14 12.5 L6 20" stroke="#d0d0d3" stroke-width="2.8" stroke-linecap="round" stroke-linejoin="round"/></svg>
<div style="position:absolute;left:1053px;top:623.3px;width:2px;height:25px;background:#323f52;border-radius:0px;"></div>
<div style="position:absolute;left:1065.60px;top:626.92px;font-family:'Liberation Mono', monospace;font-size:24px;line-height:1;font-weight:normal;color:#dcdce0;letter-spacing:0.000px;white-space:pre;">Oct 21 11:00:00.000 AM</div>
<div style="position:absolute;left:1727.60px;top:624.92px;font-family:'Liberation Mono', monospace;font-size:24px;line-height:1;font-weight:normal;color:#9c9da2;letter-spacing:0.000px;white-space:pre;">info</div>
<div style="position:absolute;left:1957.00px;top:626.92px;font-family:'Liberation Mono', monospace;font-size:24px;line-height:1;font-weight:normal;color:#e9e9eb;letter-spacing:0.000px;white-space:pre;">{&quot;time_local&quot;:&quot;21/Oct/2025:16:00:00 +0000&quot;,&quot;remote_addr&quot;:&quot;236.102.194.182&quot;,&quot;remote_user&quot;:&quot;-&quot;,&quot;request&quot;:&quot;POST /docs/api-referenc…</div>
<svg style="position:absolute;left:1019px;top:664.3px;" width="20" height="24" viewBox="0 0 20 24" fill="none"><path d="M6 5 L14 12.5 L6 20" stroke="#d0d0d3" stroke-width="2.8" stroke-linecap="round" stroke-linejoin="round"/></svg>
<div style="position:absolute;left:1053px;top:663.3px;width:2px;height:25px;background:#323f52;border-radius:0px;"></div>
<div style="position:absolute;left:1065.60px;top:666.92px;font-family:'Liberation Mono', monospace;font-size:24px;line-height:1;font-weight:normal;color:#dcdce0;letter-spacing:0.000px;white-space:pre;">Oct 21 10:59:58.000 AM</div>
<div style="position:absolute;left:1727.60px;top:664.92px;font-family:'Liberation Mono', monospace;font-size:24px;line-height:1;font-weight:normal;color:#9c9da2;letter-spacing:0.000px;white-space:pre;">info</div>
<div style="position:absolute;left:1957.00px;top:666.92px;font-family:'Liberation Mono', monospace;font-size:24px;line-height:1;font-weight:normal;color:#e9e9eb;letter-spacing:0.000px;white-space:pre;">{&quot;time_local&quot;:&quot;21/Oct/2025:15:59:58 +0000&quot;,&quot;remote_addr&quot;:&quot;145.164.38.216&quot;,&quot;remote_user&quot;:&quot;-&quot;,&quot;request&quot;:&quot;PUT /checkout HTTP/1.1&quot;,…</div>
<svg style="position:absolute;left:1019px;top:704.3px;" width="20" height="24" viewBox="0 0 20 24" fill="none"><path d="M6 5 L14 12.5 L6 20" stroke="#d0d0d3" stroke-width="2.8" stroke-linecap="round" stroke-linejoin="round"/></svg>
<div style="position:absolute;left:1053px;top:703.3px;width:2px;height:25px;background:#323f52;border-radius:0px;"></div>
<div style="position:absolute;left:1065.60px;top:706.92px;font-family:'Liberation Mono', monospace;font-size:24px;line-height:1;font-weight:normal;color:#dcdce0;letter-spacing:0.000px;white-space:pre;">Oct 21 10:59:58.000 AM</div>
<div style="position:absolute;left:1727.60px;top:704.92px;font-family:'Liberation Mono', monospace;font-size:24px;line-height:1;font-weight:normal;color:#9c9da2;letter-spacing:0.000px;white-space:pre;">info</div>
<div style="position:absolute;left:1957.00px;top:706.92px;font-family:'Liberation Mono', monospace;font-size:24px;line-height:1;font-weight:normal;color:#e9e9eb;letter-spacing:0.000px;white-space:pre;">{&quot;time_local&quot;:&quot;21/Oct/2025:15:59:58 +0000&quot;,&quot;remote_addr&quot;:&quot;145.164.38.216&quot;,&quot;remote_user&quot;:&quot;-&quot;,&quot;request&quot;:&quot;PUT /checkout HTTP/1.1&quot;,…</div>
<svg style="position:absolute;left:1019px;top:744.3px;" width="20" height="24" viewBox="0 0 20 24" fill="none"><path d="M6 5 L14 12.5 L6 20" stroke="#d0d0d3" stroke-width="2.8" stroke-linecap="round" stroke-linejoin="round"/></svg>
<div style="position:absolute;left:1053px;top:743.3px;width:2px;height:25px;background:#323f52;border-radius:0px;"></div>
<div style="position:absolute;left:1065.60px;top:746.92px;font-family:'Liberation Mono', monospace;font-size:24px;line-height:1;font-weight:normal;color:#dcdce0;letter-spacing:0.000px;white-space:pre;">Oct 21 10:59:56.000 AM</div>
<div style="position:absolute;left:1727.60px;top:744.92px;font-family:'Liberation Mono', monospace;font-size:24px;line-height:1;font-weight:normal;color:#9c9da2;letter-spacing:0.000px;white-space:pre;">info</div>
<div style="position:absolute;left:1957.00px;top:746.92px;font-family:'Liberation Mono', monospace;font-size:24px;line-height:1;font-weight:normal;color:#e9e9eb;letter-spacing:0.000px;white-space:pre;">{&quot;time_local&quot;:&quot;21/Oct/2025:15:59:56 +0000&quot;,&quot;remote_addr&quot;:&quot;122.16.144.137&quot;,&quot;remote_user&quot;:&quot;-&quot;,&quot;request&quot;:&quot;PUT /blog HTTP/1.1&quot;,&quot;sta…</div>
<svg style="position:absolute;left:1019px;top:784.3px;" width="20" height="24" viewBox="0 0 20 24" fill="none"><path d="M6 5 L14 12.5 L6 20" stroke="#d0d0d3" stroke-width="2.8" stroke-linecap="round" stroke-linejoin="round"/></svg>
<div style="position:absolute;left:1053px;top:783.3px;width:2px;height:25px;background:#323f52;border-radius:0px;"></div>
<div style="position:absolute;left:1065.60px;top:786.92px;font-family:'Liberation Mono', monospace;font-size:24px;line-height:1;font-weight:normal;color:#dcdce0;letter-spacing:0.000px;white-space:pre;">Oct 21 10:59:56.000 AM</div>
<div style="position:absolute;left:1727.60px;top:784.92px;font-family:'Liberation Mono', monospace;font-size:24px;line-height:1;font-weight:normal;color:#9c9da2;letter-spacing:0.000px;white-space:pre;">info</div>
<div style="position:absolute;left:1957.00px;top:786.92px;font-family:'Liberation Mono', monospace;font-size:24px;line-height:1;font-weight:normal;color:#e9e9eb;letter-spacing:0.000px;white-space:pre;">{&quot;time_local&quot;:&quot;21/Oct/2025:15:59:56 +0000&quot;,&quot;remote_addr&quot;:&quot;122.16.144.137&quot;,&quot;remote_user&quot;:&quot;-&quot;,&quot;request&quot;:&quot;PUT /blog HTTP/1.1&quot;,&quot;sta…</div>
<svg style="position:absolute;left:1019px;top:824.3px;" width="20" height="24" viewBox="0 0 20 24" fill="none"><path d="M6 5 L14 12.5 L6 20" stroke="#d0d0d3" stroke-width="2.8" stroke-linecap="round" stroke-linejoin="round"/></svg>
<div style="position:absolute;left:1053px;top:823.3px;width:2px;height:25px;background:#323f52;border-radius:0px;"></div>
<div style="position:absolute;left:1065.60px;top:826.92px;font-family:'Liberation Mono', monospace;font-size:24px;line-height:1;font-weight:normal;color:#dcdce0;letter-spacing:0.000px;white-space:pre;">Oct 21 10:59:54.000 AM</div>
<div style="position:absolute;left:1727.60px;top:824.92px;font-family:'Liberation Mono', monospace;font-size:24px;line-height:1;font-weight:normal;color:#9c9da2;letter-spacing:0.000px;white-space:pre;">info</div>
<div style="position:absolute;left:1957.00px;top:826.92px;font-family:'Liberation Mono', monospace;font-size:24px;line-height:1;font-weight:normal;color:#e9e9eb;letter-spacing:0.000px;white-space:pre;">{&quot;time_local&quot;:&quot;21/Oct/2025:15:59:54 +0000&quot;,&quot;remote_addr&quot;:&quot;183.161.112.183&quot;,&quot;remote_user&quot;:&quot;-&quot;,&quot;request&quot;:&quot;PATCH /cart HTTP/1.1&quot;,&quot;…</div>
<svg style="position:absolute;left:1019px;top:864.3px;" width="20" height="24" viewBox="0 0 20 24" fill="none"><path d="M6 5 L14 12.5 L6 20" stroke="#d0d0d3" stroke-width="2.8" stroke-linecap="round" stroke-linejoin="round"/></svg>
<div style="position:absolute;left:1053px;top:863.3px;width:2px;height:25px;background:#323f52;border-radius:0px;"></div>
<div style="position:absolute;left:1065.60px;top:866.92px;font-family:'Liberation Mono', monospace;font-size:24px;line-height:1;font-weight:normal;color:#dcdce0;letter-spacing:0.000px;white-space:pre;">Oct 21 10:59:54.000 AM</div>
<div style="position:absolute;left:1727.60px;top:864.92px;font-family:'Liberation Mono', monospace;font-size:24px;line-height:1;font-weight:normal;color:#9c9da2;letter-spacing:0.000px;white-space:pre;">info</div>
<div style="position:absolute;left:1957.00px;top:866.92px;font-family:'Liberation Mono', monospace;font-size:24px;line-height:1;font-weight:normal;color:#e9e9eb;letter-spacing:0.000px;white-space:pre;">{&quot;time_local&quot;:&quot;21/Oct/2025:15:59:54 +0000&quot;,&quot;remote_addr&quot;:&quot;183.161.112.183&quot;,&quot;remote_user&quot;:&quot;-&quot;,&quot;request&quot;:&quot;PATCH /cart HTTP/1.1&quot;,&quot;…</div>
<svg style="position:absolute;left:1019px;top:904.3px;" width="20" height="24" viewBox="0 0 20 24" fill="none"><path d="M6 5 L14 12.5 L6 20" stroke="#d0d0d3" stroke-width="2.8" stroke-linecap="round" stroke-linejoin="round"/></svg>
<div style="position:absolute;left:1053px;top:903.3px;width:2px;height:25px;background:#323f52;border-radius:0px;"></div>
<div style="position:absolute;left:1065.60px;top:906.92px;font-family:'Liberation Mono', monospace;font-size:24px;line-height:1;font-weight:normal;color:#dcdce0;letter-spacing:0.000px;white-space:pre;">Oct 21 10:59:52.000 AM</div>
<div style="position:absolute;left:1727.60px;top:904.92px;font-family:'Liberation Mono', monospace;font-size:24px;line-height:1;font-weight:normal;color:#9c9da2;letter-spacing:0.000px;white-space:pre;">info</div>
<div style="position:absolute;left:1957.00px;top:906.92px;font-family:'Liberation Mono', monospace;font-size:24px;line-height:1;font-weight:normal;color:#e9e9eb;letter-spacing:0.000px;white-space:pre;">{&quot;time_local&quot;:&quot;21/Oct/2025:15:59:52 +0000&quot;,&quot;remote_addr&quot;:&quot;185.72.86.168&quot;,&quot;remote_user&quot;:&quot;-&quot;,&quot;request&quot;:&quot;PUT /cart HTTP/1.1&quot;,&quot;stat…</div>
<svg style="position:absolute;left:1019px;top:944.3px;" width="20" height="24" viewBox="0 0 20 24" fill="none"><path d="M6 5 L14 12.5 L6 20" stroke="#d0d0d3" stroke-width="2.8" stroke-linecap="round" stroke-linejoin="round"/></svg>
<div style="position:absolute;left:1053px;top:943.3px;width:2px;height:25px;background:#323f52;border-radius:0px;"></div>
<div style="position:absolute;left:1065.60px;top:946.92px;font-family:'Liberation Mono', monospace;font-size:24px;line-height:1;font-weight:normal;color:#dcdce0;letter-spacing:0.000px;white-space:pre;">Oct 21 10:59:52.000 AM</div>
<div style="position:absolute;left:1727.60px;top:944.92px;font-family:'Liberation Mono', monospace;font-size:24px;line-height:1;font-weight:normal;color:#9c9da2;letter-spacing:0.000px;white-space:pre;">info</div>
<div style="position:absolute;left:1957.00px;top:946.92px;font-family:'Liberation Mono', monospace;font-size:24px;line-height:1;font-weight:normal;color:#e9e9eb;letter-spacing:0.000px;white-space:pre;">{&quot;time_local&quot;:&quot;21/Oct/2025:15:59:52 +0000&quot;,&quot;remote_addr&quot;:&quot;185.72.86.168&quot;,&quot;remote_user&quot;:&quot;-&quot;,&quot;request&quot;:&quot;PUT /cart HTTP/1.1&quot;,&quot;stat…</div>
<svg style="position:absolute;left:1019px;top:984.3px;" width="20" height="24" viewBox="0 0 20 24" fill="none"><path d="M6 5 L14 12.5 L6 20" stroke="#d0d0d3" stroke-width="2.8" stroke-linecap="round" stroke-linejoin="round"/></svg>
<div style="position:absolute;left:1053px;top:983.3px;width:2px;height:25px;background:#323f52;border-radius:0px;"></div>
<div style="position:absolute;left:1065.60px;top:986.92px;font-family:'Liberation Mono', monospace;font-size:24px;line-height:1;font-weight:normal;color:#dcdce0;letter-spacing:0.000px;white-space:pre;">Oct 21 10:59:47.000 AM</div>
<div style="position:absolute;left:1727.60px;top:984.92px;font-family:'Liberation Mono', monospace;font-size:24px;line-height:1;font-weight:normal;color:#9c9da2;letter-spacing:0.000px;white-space:pre;">info</div>
<div style="position:absolute;left:1957.00px;top:986.92px;font-family:'Liberation Mono', monospace;font-size:24px;line-height:1;font-weight:normal;color:#e9e9eb;letter-spacing:0.000px;white-space:pre;">{&quot;time_local&quot;:&quot;21/Oct/2025:15:59:47 +0000&quot;,&quot;remote_addr&quot;:&quot;103.159.195.158&quot;,&quot;remote_user&quot;:&quot;-&quot;,&quot;request&quot;:&quot;PUT /api/search HTTP/1.…</div>
<svg style="position:absolute;left:1019px;top:1024.3px;" width="20" height="24" viewBox="0 0 20 24" fill="none"><path d="M6 5 L14 12.5 L6 20" stroke="#d0d0d3" stroke-width="2.8" stroke-linecap="round" stroke-linejoin="round"/></svg>
<div style="position:absolute;left:1053px;top:1023.3px;width:2px;height:25px;background:#323f52;border-radius:0px;"></div>
<div style="position:absolute;left:1065.60px;top:1026.92px;font-family:'Liberation Mono', monospace;font-size:24px;line-height:1;font-weight:normal;color:#dcdce0;letter-spacing:0.000px;white-space:pre;">Oct 21 10:59:47.000 AM</div>
<div style="position:absolute;left:1727.60px;top:1024.92px;font-family:'Liberation Mono', monospace;font-size:24px;line-height:1;font-weight:normal;color:#9c9da2;letter-spacing:0.000px;white-space:pre;">info</div>
<div style="position:absolute;left:1957.00px;top:1026.92px;font-family:'Liberation Mono', monospace;font-size:24px;line-height:1;font-weight:normal;color:#e9e9eb;letter-spacing:0.000px;white-space:pre;">{&quot;time_local&quot;:&quot;21/Oct/2025:15:59:47 +0000&quot;,&quot;remote_addr&quot;:&quot;103.159.195.158&quot;,&quot;remote_user&quot;:&quot;-&quot;,&quot;request&quot;:&quot;PUT /api/search HTTP/1.…</div>
<svg style="position:absolute;left:1019px;top:1064.3px;" width="20" height="24" viewBox="0 0 20 24" fill="none"><path d="M6 5 L14 12.5 L6 20" stroke="#d0d0d3" stroke-width="2.8" stroke-linecap="round" stroke-linejoin="round"/></svg>
<div style="position:absolute;left:1053px;top:1063.3px;width:2px;height:25px;background:#323f52;border-radius:0px;"></div>
<div style="position:absolute;left:1065.60px;top:1066.92px;font-family:'Liberation Mono', monospace;font-size:24px;line-height:1;font-weight:normal;color:#dcdce0;letter-spacing:0.000px;white-space:pre;">Oct 21 10:59:46.000 AM</div>
<div style="position:absolute;left:1727.60px;top:1064.92px;font-family:'Liberation Mono', monospace;font-size:24px;line-height:1;font-weight:normal;color:#9c9da2;letter-spacing:0.000px;white-space:pre;">info</div>
<div style="position:absolute;left:1957.00px;top:1066.92px;font-family:'Liberation Mono', monospace;font-size:24px;line-height:1;font-weight:normal;color:#e9e9eb;letter-spacing:0.000px;white-space:pre;">{&quot;time_local&quot;:&quot;21/Oct/2025:15:59:46 +0000&quot;,&quot;remote_addr&quot;:&quot;57.128.225.45&quot;,&quot;remote_user&quot;:&quot;-&quot;,&quot;request&quot;:&quot;DELETE /js/app.js HTTP/1.…</div>
<svg style="position:absolute;left:1019px;top:1104.3px;" width="20" height="24" viewBox="0 0 20 24" fill="none"><path d="M6 5 L14 12.5 L6 20" stroke="#d0d0d3" stroke-width="2.8" stroke-linecap="round" stroke-linejoin="round"/></svg>
<div style="position:absolute;left:1053px;top:1103.3px;width:2px;height:25px;background:#323f52;border-radius:0px;"></div>
<div style="position:absolute;left:1065.60px;top:1106.92px;font-family:'Liberation Mono', monospace;font-size:24px;line-height:1;font-weight:normal;color:#dcdce0;letter-spacing:0.000px;white-space:pre;">Oct 21 10:59:46.000 AM</div>
<div style="position:absolute;left:1727.60px;top:1104.92px;font-family:'Liberation Mono', monospace;font-size:24px;line-height:1;font-weight:normal;color:#9c9da2;letter-spacing:0.000px;white-space:pre;">info</div>
<div style="position:absolute;left:1957.00px;top:1106.92px;font-family:'Liberation Mono', monospace;font-size:24px;line-height:1;font-weight:normal;color:#e9e9eb;letter-spacing:0.000px;white-space:pre;">{&quot;time_local&quot;:&quot;21/Oct/2025:15:59:46 +0000&quot;,&quot;remote_addr&quot;:&quot;57.128.225.45&quot;,&quot;remote_user&quot;:&quot;-&quot;,&quot;request&quot;:&quot;DELETE /js/app.js HTTP/1.…</div>
<svg style="position:absolute;left:1019px;top:1144.3px;" width="20" height="24" viewBox="0 0 20 24" fill="none"><path d="M6 5 L14 12.5 L6 20" stroke="#d0d0d3" stroke-width="2.8" stroke-linecap="round" stroke-linejoin="round"/></svg>
<div style="position:absolute;left:1053px;top:1143.3px;width:2px;height:25px;background:#323f52;border-radius:0px;"></div>
<div style="position:absolute;left:1065.60px;top:1146.92px;font-family:'Liberation Mono', monospace;font-size:24px;line-height:1;font-weight:normal;color:#dcdce0;letter-spacing:0.000px;white-space:pre;">Oct 21 10:59:42.000 AM</div>
<div style="position:absolute;left:1727.60px;top:1144.92px;font-family:'Liberation Mono', monospace;font-size:24px;line-height:1;font-weight:normal;color:#9c9da2;letter-spacing:0.000px;white-space:pre;">info</div>
<div style="position:absolute;left:1957.00px;top:1146.92px;font-family:'Liberation Mono', monospace;font-size:24px;line-height:1;font-weight:normal;color:#e9e9eb;letter-spacing:0.000px;white-space:pre;">{&quot;time_local&quot;:&quot;21/Oct/2025:15:59:42 +0000&quot;,&quot;remote_addr&quot;:&quot;121.90.231.126&quot;,&quot;remote_user&quot;:&quot;-&quot;,&quot;request&quot;:&quot;GET /api/orders HTTP/1.1…</div>
<svg style="position:absolute;left:1019px;top:1184.3px;" width="20" height="24" viewBox="0 0 20 24" fill="none"><path d="M6 5 L14 12.5 L6 20" stroke="#d0d0d3" stroke-width="2.8" stroke-linecap="round" stroke-linejoin="round"/></svg>
<div style="position:absolute;left:1053px;top:1183.3px;width:2px;height:25px;background:#323f52;border-radius:0px;"></div>
<div style="position:absolute;left:1065.60px;top:1186.92px;font-family:'Liberation Mono', monospace;font-size:24px;line-height:1;font-weight:normal;color:#dcdce0;letter-spacing:0.000px;white-space:pre;">Oct 21 10:59:42.000 AM</div>
<div style="position:absolute;left:1727.60px;top:1184.92px;font-family:'Liberation Mono', monospace;font-size:24px;line-height:1;font-weight:normal;color:#9c9da2;letter-spacing:0.000px;white-space:pre;">info</div>
<div style="position:absolute;left:1957.00px;top:1186.92px;font-family:'Liberation Mono', monospace;font-size:24px;line-height:1;font-weight:normal;color:#e9e9eb;letter-spacing:0.000px;white-space:pre;">{&quot;time_local&quot;:&quot;21/Oct/2025:15:59:42 +0000&quot;,&quot;remote_addr&quot;:&quot;121.90.231.126&quot;,&quot;remote_user&quot;:&quot;-&quot;,&quot;request&quot;:&quot;GET /api/orders HTTP/1.1…</div>
<svg style="position:absolute;left:1019px;top:1224.3px;" width="20" height="24" viewBox="0 0 20 24" fill="none"><path d="M6 5 L14 12.5 L6 20" stroke="#d0d0d3" stroke-width="2.8" stroke-linecap="round" stroke-linejoin="round"/></svg>
<div style="position:absolute;left:1053px;top:1223.3px;width:2px;height:25px;background:#323f52;border-radius:0px;"></div>
<div style="position:absolute;left:1065.60px;top:1226.92px;font-family:'Liberation Mono', monospace;font-size:24px;line-height:1;font-weight:normal;color:#dcdce0;letter-spacing:0.000px;white-space:pre;">Oct 21 10:59:39.000 AM</div>
<div style="position:absolute;left:1727.60px;top:1224.92px;font-family:'Liberation Mono', monospace;font-size:24px;line-height:1;font-weight:normal;color:#9c9da2;letter-spacing:0.000px;white-space:pre;">info</div>
<div style="position:absolute;left:1957.00px;top:1226.92px;font-family:'Liberation Mono', monospace;font-size:24px;line-height:1;font-weight:normal;color:#e9e9eb;letter-spacing:0.000px;white-space:pre;">{&quot;time_local&quot;:&quot;21/Oct/2025:15:59:39 +0000&quot;,&quot;remote_addr&quot;:&quot;117.69.46.144&quot;,&quot;remote_user&quot;:&quot;-&quot;,&quot;request&quot;:&quot;GET /contact HTTP/1.1&quot;,&quot;s…</div>
<svg style="position:absolute;left:1019px;top:1264.3px;" width="20" height="24" viewBox="0 0 20 24" fill="none"><path d="M6 5 L14 12.5 L6 20" stroke="#d0d0d3" stroke-width="2.8" stroke-linecap="round" stroke-linejoin="round"/></svg>
<div style="position:absolute;left:1053px;top:1263.3px;width:2px;height:25px;background:#323f52;border-radius:0px;"></div>
<div style="position:absolute;left:1065.60px;top:1266.92px;font-family:'Liberation Mono', monospace;font-size:24px;line-height:1;font-weight:normal;color:#dcdce0;letter-spacing:0.000px;white-space:pre;">Oct 21 10:59:39.000 AM</div>
<div style="position:absolute;left:1727.60px;top:1264.92px;font-family:'Liberation Mono', monospace;font-size:24px;line-height:1;font-weight:normal;color:#9c9da2;letter-spacing:0.000px;white-space:pre;">info</div>
<div style="position:absolute;left:1957.00px;top:1266.92px;font-family:'Liberation Mono', monospace;font-size:24px;line-height:1;font-weight:normal;color:#e9e9eb;letter-spacing:0.000px;white-space:pre;">{&quot;time_local&quot;:&quot;21/Oct/2025:15:59:39 +0000&quot;,&quot;remote_addr&quot;:&quot;117.69.46.144&quot;,&quot;remote_user&quot;:&quot;-&quot;,&quot;request&quot;:&quot;GET /contact HTTP/1.1&quot;,&quot;s…</div>
<svg style="position:absolute;left:1019px;top:1304.3px;" width="20" height="24" viewBox="0 0 20 24" fill="none"><path d="M6 5 L14 12.5 L6 20" stroke="#d0d0d3" stroke-width="2.8" stroke-linecap="round" stroke-linejoin="round"/></svg>
<div style="position:absolute;left:1053px;top:1303.3px;width:2px;height:25px;background:#323f52;border-radius:0px;"></div>
<div style="position:absolute;left:1065.60px;top:1306.92px;font-family:'Liberation Mono', monospace;font-size:24px;line-height:1;font-weight:normal;color:#dcdce0;letter-spacing:0.000px;white-space:pre;">Oct 21 10:59:38.000 AM</div>
<div style="position:absolute;left:1727.60px;top:1304.92px;font-family:'Liberation Mono', monospace;font-size:24px;line-height:1;font-weight:normal;color:#9c9da2;letter-spacing:0.000px;white-space:pre;">info</div>
<div style="position:absolute;left:1957.00px;top:1306.92px;font-family:'Liberation Mono', monospace;font-size:24px;line-height:1;font-weight:normal;color:#e9e9eb;letter-spacing:0.000px;white-space:pre;">{&quot;time_local&quot;:&quot;21/Oct/2025:15:59:38 +0000&quot;,&quot;remote_addr&quot;:&quot;136.132.72.125&quot;,&quot;remote_user&quot;:&quot;-&quot;,&quot;request&quot;:&quot;GET /admin/users HTTP/1.…</div>
<svg style="position:absolute;left:1019px;top:1344.3px;" width="20" height="24" viewBox="0 0 20 24" fill="none"><path d="M6 5 L14 12.5 L6 20" stroke="#d0d0d3" stroke-width="2.8" stroke-linecap="round" stroke-linejoin="round"/></svg>
<div style="position:absolute;left:1053px;top:1343.3px;width:2px;height:25px;background:#323f52;border-radius:0px;"></div>
<div style="position:absolute;left:1065.60px;top:1346.92px;font-family:'Liberation Mono', monospace;font-size:24px;line-height:1;font-weight:normal;color:#dcdce0;letter-spacing:0.000px;white-space:pre;">Oct 21 10:59:38.000 AM</div>
<div style="position:absolute;left:1727.60px;top:1344.92px;font-family:'Liberation Mono', monospace;font-size:24px;line-height:1;font-weight:normal;color:#9c9da2;letter-spacing:0.000px;white-space:pre;">info</div>
<div style="position:absolute;left:1957.00px;top:1346.92px;font-family:'Liberation Mono', monospace;font-size:24px;line-height:1;font-weight:normal;color:#e9e9eb;letter-spacing:0.000px;white-space:pre;">{&quot;time_local&quot;:&quot;21/Oct/2025:15:59:38 +0000&quot;,&quot;remote_addr&quot;:&quot;136.132.72.125&quot;,&quot;remote_user&quot;:&quot;-&quot;,&quot;request&quot;:&quot;GET /admin/users HTTP/1.…</div>
<svg style="position:absolute;left:1019px;top:1384.3px;" width="20" height="24" viewBox="0 0 20 24" fill="none"><path d="M6 5 L14 12.5 L6 20" stroke="#d0d0d3" stroke-width="2.8" stroke-linecap="round" stroke-linejoin="round"/></svg>
<div style="position:absolute;left:1053px;top:1383.3px;width:2px;height:25px;background:#323f52;border-radius:0px;"></div>
<div style="position:absolute;left:1065.60px;top:1386.92px;font-family:'Liberation Mono', monospace;font-size:24px;line-height:1;font-weight:normal;color:#dcdce0;letter-spacing:0.000px;white-space:pre;">Oct 21 10:59:36.000 AM</div>
<div style="position:absolute;left:1727.60px;top:1384.92px;font-family:'Liberation Mono', monospace;font-size:24px;line-height:1;font-weight:normal;color:#9c9da2;letter-spacing:0.000px;white-space:pre;">info</div>
<div style="position:absolute;left:1957.00px;top:1386.92px;font-family:'Liberation Mono', monospace;font-size:24px;line-height:1;font-weight:normal;color:#e9e9eb;letter-spacing:0.000px;white-space:pre;">{&quot;time_local&quot;:&quot;21/Oct/2025:15:59:36 +0000&quot;,&quot;remote_addr&quot;:&quot;215.255.214.234&quot;,&quot;remote_user&quot;:&quot;-&quot;,&quot;request&quot;:&quot;POST /docs/api-referenc…</div>
<svg style="position:absolute;left:1019px;top:1424.3px;" width="20" height="24" viewBox="0 0 20 24" fill="none"><path d="M6 5 L14 12.5 L6 20" stroke="#d0d0d3" stroke-width="2.8" stroke-linecap="round" stroke-linejoin="round"/></svg>
<div style="position:absolute;left:1053px;top:1423.3px;width:2px;height:25px;background:#323f52;border-radius:0px;"></div>
<div style="position:absolute;left:1065.60px;top:1426.92px;font-family:'Liberation Mono', monospace;font-size:24px;line-height:1;font-weight:normal;color:#dcdce0;letter-spacing:0.000px;white-space:pre;">Oct 21 10:59:36.000 AM</div>
<div style="position:absolute;left:1727.60px;top:1424.92px;font-family:'Liberation Mono', monospace;font-size:24px;line-height:1;font-weight:normal;color:#9c9da2;letter-spacing:0.000px;white-space:pre;">info</div>
<div style="position:absolute;left:1957.00px;top:1426.92px;font-family:'Liberation Mono', monospace;font-size:24px;line-height:1;font-weight:normal;color:#e9e9eb;letter-spacing:0.000px;white-space:pre;">{&quot;time_local&quot;:&quot;21/Oct/2025:15:59:36 +0000&quot;,&quot;remote_addr&quot;:&quot;215.255.214.234&quot;,&quot;remote_user&quot;:&quot;-&quot;,&quot;request&quot;:&quot;POST /docs/api-referenc…</div>
<svg style="position:absolute;left:1019px;top:1464.3px;" width="20" height="24" viewBox="0 0 20 24" fill="none"><path d="M6 5 L14 12.5 L6 20" stroke="#d0d0d3" stroke-width="2.8" stroke-linecap="round" stroke-linejoin="round"/></svg>
<div style="position:absolute;left:1053px;top:1463.3px;width:2px;height:25px;background:#323f52;border-radius:0px;"></div>
<div style="position:absolute;left:1065.60px;top:1466.92px;font-family:'Liberation Mono', monospace;font-size:24px;line-height:1;font-weight:normal;color:#dcdce0;letter-spacing:0.000px;white-space:pre;">Oct 21 10:59:33.000 AM</div>
<div style="position:absolute;left:1727.60px;top:1464.92px;font-family:'Liberation Mono', monospace;font-size:24px;line-height:1;font-weight:normal;color:#9c9da2;letter-spacing:0.000px;white-space:pre;">info</div>
<div style="position:absolute;left:1957.00px;top:1466.92px;font-family:'Liberation Mono', monospace;font-size:24px;line-height:1;font-weight:normal;color:#e9e9eb;letter-spacing:0.000px;white-space:pre;">{&quot;time_local&quot;:&quot;21/Oct/2025:15:59:33 +0000&quot;,&quot;remote_addr&quot;:&quot;68.183.74.116&quot;,&quot;remote_user&quot;:&quot;-&quot;,&quot;request&quot;:&quot;PATCH /docs/api-reference…</div>
<svg style="position:absolute;left:1019px;top:1504.3px;" width="20" height="24" viewBox="0 0 20 24" fill="none"><path d="M6 5 L14 12.5 L6 20" stroke="#d0d0d3" stroke-width="2.8" stroke-linecap="round" stroke-linejoin="round"/></svg>
<div style="position:absolute;left:1053px;top:1503.3px;width:2px;height:25px;background:#323f52;border-radius:0px;"></div>
<div style="position:absolute;left:1065.60px;top:1506.92px;font-family:'Liberation Mono', monospace;font-size:24px;line-height:1;font-weight:normal;color:#dcdce0;letter-spacing:0.000px;white-space:pre;">Oct 21 10:59:33.000 AM</div>
<div style="position:absolute;left:1727.60px;top:1504.92px;font-family:'Liberation Mono', monospace;font-size:24px;line-height:1;font-weight:normal;color:#9c9da2;letter-spacing:0.000px;white-space:pre;">info</div>
<div style="position:absolute;left:1957.00px;top:1506.92px;font-family:'Liberation Mono', monospace;font-size:24px;line-height:1;font-weight:normal;color:#e9e9eb;letter-spacing:0.000px;white-space:pre;">{&quot;time_local&quot;:&quot;21/Oct/2025:15:59:33 +0000&quot;,&quot;remote_addr&quot;:&quot;68.183.74.116&quot;,&quot;remote_user&quot;:&quot;-&quot;,&quot;request&quot;:&quot;PATCH /docs/api-reference…</div>
<svg style="position:absolute;left:1019px;top:1544.3px;" width="20" height="24" viewBox="0 0 20 24" fill="none"><path d="M6 5 L14 12.5 L6 20" stroke="#d0d0d3" stroke-width="2.8" stroke-linecap="round" stroke-linejoin="round"/></svg>
<div style="position:absolute;left:1053px;top:1543.3px;width:2px;height:25px;background:#323f52;border-radius:0px;"></div>
<div style="position:absolute;left:1065.60px;top:1546.92px;font-family:'Liberation Mono', monospace;font-size:24px;line-height:1;font-weight:normal;color:#dcdce0;letter-spacing:0.000px;white-space:pre;">Oct 21 10:59:31.000 AM</div>
<div style="position:absolute;left:1727.60px;top:1544.92px;font-family:'Liberation Mono', monospace;font-size:24px;line-height:1;font-weight:normal;color:#9c9da2;letter-spacing:0.000px;white-space:pre;">info</div>
<div style="position:absolute;left:1957.00px;top:1546.92px;font-family:'Liberation Mono', monospace;font-size:24px;line-height:1;font-weight:normal;color:#e9e9eb;letter-spacing:0.000px;white-space:pre;">{&quot;time_local&quot;:&quot;21/Oct/2025:15:59:31 +0000&quot;,&quot;remote_addr&quot;:&quot;100.137.222.144&quot;,&quot;remote_user&quot;:&quot;-&quot;,&quot;request&quot;:&quot;PATCH /register HTTP/1.…</div>
<svg style="position:absolute;left:1019px;top:1584.3px;" width="20" height="24" viewBox="0 0 20 24" fill="none"><path d="M6 5 L14 12.5 L6 20" stroke="#d0d0d3" stroke-width="2.8" stroke-linecap="round" stroke-linejoin="round"/></svg>
<div style="position:absolute;left:1053px;top:1583.3px;width:2px;height:25px;background:#323f52;border-radius:0px;"></div>
<div style="position:absolute;left:1065.60px;top:1586.92px;font-family:'Liberation Mono', monospace;font-size:24px;line-height:1;font-weight:normal;color:#dcdce0;letter-spacing:0.000px;white-space:pre;">Oct 21 10:59:31.000 AM</div>
<div style="position:absolute;left:1727.60px;top:1584.92px;font-family:'Liberation Mono', monospace;font-size:24px;line-height:1;font-weight:normal;color:#9c9da2;letter-spacing:0.000px;white-space:pre;">info</div>
<div style="position:absolute;left:1957.00px;top:1586.92px;font-family:'Liberation Mono', monospace;font-size:24px;line-height:1;font-weight:normal;color:#e9e9eb;letter-spacing:0.000px;white-space:pre;">{&quot;time_local&quot;:&quot;21/Oct/2025:15:59:31 +0000&quot;,&quot;remote_addr&quot;:&quot;100.137.222.144&quot;,&quot;remote_user&quot;:&quot;-&quot;,&quot;request&quot;:&quot;PATCH /register HTTP/1.…</div>
<svg style="position:absolute;left:1019px;top:1624.3px;" width="20" height="24" viewBox="0 0 20 24" fill="none"><path d="M6 5 L14 12.5 L6 20" stroke="#d0d0d3" stroke-width="2.8" stroke-linecap="round" stroke-linejoin="round"/></svg>
<div style="position:absolute;left:1053px;top:1623.3px;width:2px;height:25px;background:#323f52;border-radius:0px;"></div>
<div style="position:absolute;left:1065.60px;top:1626.92px;font-family:'Liberation Mono', monospace;font-size:24px;line-height:1;font-weight:normal;color:#dcdce0;letter-spacing:0.000px;white-space:pre;">Oct 21 10:59:29.000 AM</div>
<div style="position:absolute;left:1727.60px;top:1624.92px;font-family:'Liberation Mono', monospace;font-size:24px;line-height:1;font-weight:normal;color:#9c9da2;letter-spacing:0.000px;white-space:pre;">info</div>
<div style="position:absolute;left:1957.00px;top:1626.92px;font-family:'Liberation Mono', monospace;font-size:24px;line-height:1;font-weight:normal;color:#e9e9eb;letter-spacing:0.000px;white-space:pre;">{&quot;time_local&quot;:&quot;21/Oct/2025:15:59:29 +0000&quot;,&quot;remote_addr&quot;:&quot;239.177.178.168&quot;,&quot;remote_user&quot;:&quot;-&quot;,&quot;request&quot;:&quot;PUT /js/app.js HTTP/1.1…</div>
<svg style="position:absolute;left:1019px;top:1664.3px;" width="20" height="24" viewBox="0 0 20 24" fill="none"><path d="M6 5 L14 12.5 L6 20" stroke="#d0d0d3" stroke-width="2.8" stroke-linecap="round" stroke-linejoin="round"/></svg>
<div style="position:absolute;left:1053px;top:1663.3px;width:2px;height:25px;background:#323f52;border-radius:0px;"></div>
<div style="position:absolute;left:1065.60px;top:1666.92px;font-family:'Liberation Mono', monospace;font-size:24px;line-height:1;font-weight:normal;color:#dcdce0;letter-spacing:0.000px;white-space:pre;">Oct 21 10:59:29.000 AM</div>
<div style="position:absolute;left:1727.60px;top:1664.92px;font-family:'Liberation Mono', monospace;font-size:24px;line-height:1;font-weight:normal;color:#9c9da2;letter-spacing:0.000px;white-space:pre;">info</div>
<div style="position:absolute;left:1957.00px;top:1666.92px;font-family:'Liberation Mono', monospace;font-size:24px;line-height:1;font-weight:normal;color:#e9e9eb;letter-spacing:0.000px;white-space:pre;">{&quot;time_local&quot;:&quot;21/Oct/2025:15:59:29 +0000&quot;,&quot;remote_addr&quot;:&quot;239.177.178.168&quot;,&quot;remote_user&quot;:&quot;-&quot;,&quot;request&quot;:&quot;PUT /js/app.js HTTP/1.1…</div>
<svg style="position:absolute;left:1019px;top:1704.3px;" width="20" height="24" viewBox="0 0 20 24" fill="none"><path d="M6 5 L14 12.5 L6 20" stroke="#d0d0d3" stroke-width="2.8" stroke-linecap="round" stroke-linejoin="round"/></svg>
<div style="position:absolute;left:1053px;top:1703.3px;width:2px;height:25px;background:#323f52;border-radius:0px;"></div>
<div style="position:absolute;left:1065.60px;top:1706.92px;font-family:'Liberation Mono', monospace;font-size:24px;line-height:1;font-weight:normal;color:#dcdce0;letter-spacing:0.000px;white-space:pre;">Oct 21 10:59:19.000 AM</div>
<div style="position:absolute;left:1727.60px;top:1704.92px;font-family:'Liberation Mono', monospace;font-size:24px;line-height:1;font-weight:normal;color:#9c9da2;letter-spacing:0.000px;white-space:pre;">info</div>
<div style="position:absolute;left:1957.00px;top:1706.92px;font-family:'Liberation Mono', monospace;font-size:24px;line-height:1;font-weight:normal;color:#e9e9eb;letter-spacing:0.000px;white-space:pre;">{&quot;time_local&quot;:&quot;21/Oct/2025:15:59:19 +0000&quot;,&quot;remote_addr&quot;:&quot;1.140.197.114&quot;,&quot;remote_user&quot;:&quot;-&quot;,&quot;request&quot;:&quot;DELETE /api/products HTTP…</div>
<svg style="position:absolute;left:1019px;top:1744.3px;" width="20" height="24" viewBox="0 0 20 24" fill="none"><path d="M6 5 L14 12.5 L6 20" stroke="#d0d0d3" stroke-width="2.8" stroke-linecap="round" stroke-linejoin="round"/></svg>
<div style="position:absolute;left:1053px;top:1743.3px;width:2px;height:25px;background:#323f52;border-radius:0px;"></div>
<div style="position:absolute;left:1065.60px;top:1746.92px;font-family:'Liberation Mono', monospace;font-size:24px;line-height:1;font-weight:normal;color:#dcdce0;letter-spacing:0.000px;white-space:pre;">Oct 21 10:59:19.000 AM</div>
<div style="position:absolute;left:1727.60px;top:1744.92px;font-family:'Liberation Mono', monospace;font-size:24px;line-height:1;font-weight:normal;color:#9c9da2;letter-spacing:0.000px;white-space:pre;">info</div>
<div style="position:absolute;left:1957.00px;top:1746.92px;font-family:'Liberation Mono', monospace;font-size:24px;line-height:1;font-weight:normal;color:#e9e9eb;letter-spacing:0.000px;white-space:pre;">{&quot;time_local&quot;:&quot;21/Oct/2025:15:59:19 +0000&quot;,&quot;remote_addr&quot;:&quot;136.86.21.110&quot;,&quot;remote_user&quot;:&quot;-&quot;,&quot;request&quot;:&quot;DELETE /register HTTP/1.1…</div>
<svg style="position:absolute;left:1019px;top:1784.3px;" width="20" height="24" viewBox="0 0 20 24" fill="none"><path d="M6 5 L14 12.5 L6 20" stroke="#d0d0d3" stroke-width="2.8" stroke-linecap="round" stroke-linejoin="round"/></svg>
<div style="position:absolute;left:1053px;top:1783.3px;width:2px;height:25px;background:#323f52;border-radius:0px;"></div>
<div style="position:absolute;left:1065.60px;top:1786.92px;font-family:'Liberation Mono', monospace;font-size:24px;line-height:1;font-weight:normal;color:#dcdce0;letter-spacing:0.000px;white-space:pre;">Oct 21 10:59:19.000 AM</div>
<div style="position:absolute;left:1727.60px;top:1784.92px;font-family:'Liberation Mono', monospace;font-size:24px;line-height:1;font-weight:normal;color:#9c9da2;letter-spacing:0.000px;white-space:pre;">info</div>
<div style="position:absolute;left:1957.00px;top:1786.92px;font-family:'Liberation Mono', monospace;font-size:24px;line-height:1;font-weight:normal;color:#e9e9eb;letter-spacing:0.000px;white-space:pre;">{&quot;time_local&quot;:&quot;21/Oct/2025:15:59:19 +0000&quot;,&quot;remote_addr&quot;:&quot;1.140.197.114&quot;,&quot;remote_user&quot;:&quot;-&quot;,&quot;request&quot;:&quot;DELETE /api/products HTTP…</div>
<svg style="position:absolute;left:1019px;top:1824.3px;" width="20" height="24" viewBox="0 0 20 24" fill="none"><path d="M6 5 L14 12.5 L6 20" stroke="#d0d0d3" stroke-width="2.8" stroke-linecap="round" stroke-linejoin="round"/></svg>
<div style="position:absolute;left:1053px;top:1823.3px;width:2px;height:25px;background:#323f52;border-radius:0px;"></div>
<div style="position:absolute;left:1065.60px;top:1826.92px;font-family:'Liberation Mono', monospace;font-size:24px;line-height:1;font-weight:normal;color:#dcdce0;letter-spacing:0.000px;white-space:pre;">Oct 21 10:59:19.000 AM</div>
<div style="position:absolute;left:1727.60px;top:1824.92px;font-family:'Liberation Mono', monospace;font-size:24px;line-height:1;font-weight:normal;color:#9c9da2;letter-spacing:0.000px;white-space:pre;">info</div>
<div style="position:absolute;left:1957.00px;top:1826.92px;font-family:'Liberation Mono', monospace;font-size:24px;line-height:1;font-weight:normal;color:#e9e9eb;letter-spacing:0.000px;white-space:pre;">{&quot;time_local&quot;:&quot;21/Oct/2025:15:59:19 +0000&quot;,&quot;remote_addr&quot;:&quot;136.86.21.110&quot;,&quot;remote_user&quot;:&quot;-&quot;,&quot;request&quot;:&quot;DELETE /register HTTP/1.1…</div>
<svg style="position:absolute;left:1019px;top:1864.3px;" width="20" height="24" viewBox="0 0 20 24" fill="none"><path d="M6 5 L14 12.5 L6 20" stroke="#d0d0d3" stroke-width="2.8" stroke-linecap="round" stroke-linejoin="round"/></svg>
<div style="position:absolute;left:1053px;top:1863.3px;width:2px;height:25px;background:#323f52;border-radius:0px;"></div>
<div style="position:absolute;left:1065.60px;top:1866.92px;font-family:'Liberation Mono', monospace;font-size:24px;line-height:1;font-weight:normal;color:#dcdce0;letter-spacing:0.000px;white-space:pre;">Oct 21 10:59:17.000 AM</div>
<div style="position:absolute;left:1727.60px;top:1864.92px;font-family:'Liberation Mono', monospace;font-size:24px;line-height:1;font-weight:normal;color:#9c9da2;letter-spacing:0.000px;white-space:pre;">info</div>
<div style="position:absolute;left:1957.00px;top:1866.92px;font-family:'Liberation Mono', monospace;font-size:24px;line-height:1;font-weight:normal;color:#e9e9eb;letter-spacing:0.000px;white-space:pre;">{&quot;time_local&quot;:&quot;21/Oct/2025:15:59:17 +0000&quot;,&quot;remote_addr&quot;:&quot;80.38.211.152&quot;,&quot;remote_user&quot;:&quot;-&quot;,&quot;request&quot;:&quot;DELETE /admin/users HTTP/…</div>
<svg style="position:absolute;left:1019px;top:1904.3px;" width="20" height="24" viewBox="0 0 20 24" fill="none"><path d="M6 5 L14 12.5 L6 20" stroke="#d0d0d3" stroke-width="2.8" stroke-linecap="round" stroke-linejoin="round"/></svg>
<div style="position:absolute;left:1053px;top:1903.3px;width:2px;height:25px;background:#323f52;border-radius:0px;"></div>
<div style="position:absolute;left:1065.60px;top:1906.92px;font-family:'Liberation Mono', monospace;font-size:24px;line-height:1;font-weight:normal;color:#dcdce0;letter-spacing:0.000px;white-space:pre;">Oct 21 10:59:17.000 AM</div>
<div style="position:absolute;left:1727.60px;top:1904.92px;font-family:'Liberation Mono', monospace;font-size:24px;line-height:1;font-weight:normal;color:#9c9da2;letter-spacing:0.000px;white-space:pre;">info</div>
<div style="position:absolute;left:1957.00px;top:1906.92px;font-family:'Liberation Mono', monospace;font-size:24px;line-height:1;font-weight:normal;color:#e9e9eb;letter-spacing:0.000px;white-space:pre;">{&quot;time_local&quot;:&quot;21/Oct/2025:15:59:17 +0000&quot;,&quot;remote_addr&quot;:&quot;80.38.211.152&quot;,&quot;remote_user&quot;:&quot;-&quot;,&quot;request&quot;:&quot;DELETE /admin/users HTTP/…</div>
</div>
</body></html>
